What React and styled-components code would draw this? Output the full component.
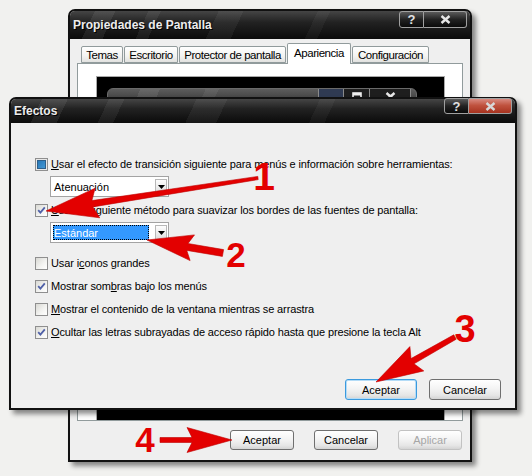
import React from "react";
import styled, { createGlobalStyle, css } from "styled-components";

const GlobalStyle = createGlobalStyle`
  html, body { margin: 0; padding: 0; }
  body {
    background: #f1f1ef;
    font-family: "Liberation Sans", Arial, sans-serif;
    font-size: 11px;
    color: #000;
  }
  #root { width: 532px; height: 476px; overflow: hidden; }
`;

const Desktop = styled.div`
  position: relative;
  width: 532px;
  height: 476px;
  overflow: hidden;
  background: #f1f1ef;
`;

const Window = styled.div`
  position: absolute;
  left: ${(p) => p.$x}px;
  top: ${(p) => p.$y}px;
  width: ${(p) => p.$w}px;
  height: ${(p) => p.$h}px;
  box-sizing: border-box;
  display: flex;
  flex-direction: column;
  background: #efefef;
  border: 2px solid #111;
  border-radius: 7px 7px 0 0;
  box-shadow: 4px 4px 5px rgba(0, 0, 0, 0.45);
`;

const TitleBar = styled.div`
  flex: none;
  height: ${(p) => p.$h}px;
  display: flex;
  align-items: flex-start;
  justify-content: space-between;
  padding: 0 ${(p) => p.$pr}px 0 3px;
  border-radius: 5px 5px 0 0;
  background:
    linear-gradient(115deg, transparent 0 6%, rgba(255,255,255,0.07) 6% 11%, transparent 11% 19%,
      rgba(255,255,255,0.06) 19% 22%, transparent 22% 36%, rgba(255,255,255,0.05) 36% 42%,
      transparent 42% 60%, rgba(255,255,255,0.04) 60% 63%, transparent 63%),
    linear-gradient(180deg, #454545 0%, #222 40%, #0b0b0b 100%);
`;

const Title = styled.div`
  align-self: center;
  font-family: "Liberation Sans", Arial, sans-serif;
  font-weight: bold;
  font-size: 12px;
  color: #ececec;
  text-shadow: 1px 1px 0 #000;
`;

const CapGroup = styled.div`
  display: flex;
  margin-top: ${(p) => p.$mt}px;
`;

const CapBtn = styled.div`
  box-sizing: border-box;
  width: ${(p) => p.$w}px;
  height: ${(p) => p.$h}px;
  display: flex;
  align-items: center;
  justify-content: center;
  border: 1px solid #a0a0a0;
  border-radius: ${(p) => (p.$close ? "0 3px 3px 0" : "3px 0 0 3px")};
  ${(p) => p.$close && "border-left: none;"}
  font: bold 13px "Liberation Sans", Arial, sans-serif;
  color: #e2e2e2;
  background: ${(p) =>
    p.$red
      ? "linear-gradient(180deg, #d98a80 0%, #c0533f 45%, #a7321f 100%)"
      : "linear-gradient(180deg, #5a5a5a 0%, #222 50%, #0a0a0a 100%)"};
`;

const CloseGlyph = ({ color = "#e6e6e6" }) => (
  <svg width="11" height="9" viewBox="0 0 11 9">
    <path d="M1.5 1 L9.5 8 M9.5 1 L1.5 8" stroke={color} strokeWidth="2.4" fill="none" />
  </svg>
);

/* ---------- back window ---------- */

const BackBody = styled.div`
  flex: 1;
  display: flex;
  flex-direction: column;
  padding: 4px 7px 10px 7px;
  min-height: 0;
`;

const TabRow = styled.div`
  display: flex;
  align-items: flex-end;
  gap: 1px;
  height: 21px;
  padding-left: 4px;
  margin-bottom: -1px;
  position: relative;
  z-index: 1;
`;

const Tab = styled.div`
  box-sizing: border-box;
  width: ${(p) => p.$w}px;
  height: ${(p) => (p.$active ? 21 : 17)}px;
  margin-bottom: ${(p) => (p.$active ? 0 : 1)}px;
  display: flex;
  align-items: ${(p) => (p.$active ? "flex-start" : "center")};
  padding-top: ${(p) => (p.$active ? 3 : 0)}px;
  justify-content: center;
  border: 1px solid #919b9c;
  border-bottom: ${(p) => (p.$active ? "none" : "1px solid #919b9c")};
  border-radius: 2px 2px 0 0;
  background: ${(p) =>
    p.$active ? "#fff" : "linear-gradient(180deg, #fff 0%, #f3f3f1 60%, #e2e2e0 100%)"};
  font-family: "Liberation Sans", Arial, sans-serif;
  font-size: 11.5px;
  letter-spacing: -0.45px;
  white-space: nowrap;
`;

const TabPanel = styled.div`
  flex: 1;
  border: 1px solid #919b9c;
  background: #fff;
  padding: 12px 0 0 18px;
  overflow: hidden;
`;

const Preview = styled.div`
  box-sizing: border-box;
  width: 349px;
  height: 360px;
  background: #000;
  border: 1px solid #a9a9a9;
  padding: 11px 0 0 10px;
`;

const MiniWindow = styled.div`
  box-sizing: border-box;
  width: 310px;
  height: 40px;
  border: 1px solid #6a6a6a;
  border-radius: 6px 6px 0 0;
  background:
    linear-gradient(115deg, transparent 0 10%, rgba(255,255,255,0.08) 10% 16%, transparent 16% 30%,
      rgba(255,255,255,0.06) 30% 34%, transparent 34%),
    linear-gradient(180deg, #5c5c5c 0%, #2c2c2c 50%, #111 100%);
  display: flex;
  justify-content: flex-end;
  padding: 0 5px 0 0;
`;

const MiniBtn = styled.div`
  box-sizing: border-box;
  width: ${(p) => p.$w}px;
  height: 18px;
  border: 1px solid #8a8a8a;
  border-top: none;
  margin-left: -1px;
  background: ${(p) => (p.$blue ? "#2f3a52" : "#1e1e1e")};
  display: flex;
  justify-content: center;
  padding-top: 3px;
`;

const ButtonRow = styled.div`
  display: flex;
  justify-content: flex-end;
  gap: ${(p) => p.$gap}px;
  margin-top: ${(p) => p.$mt};
  padding-right: ${(p) => p.$pr}px;
`;

const Button = styled.div`
  box-sizing: border-box;
  width: ${(p) => p.$w}px;
  height: ${(p) => p.$h}px;
  display: flex;
  align-items: center;
  justify-content: center;
  border: 1px solid ${(p) => (p.$disabled ? "#c2c2c2" : "#6f6f6f")};
  border-radius: 3px;
  background: linear-gradient(180deg, #ffffff 0%, #f4f4f4 45%, #e6e6e6 80%, #d4d4d4 100%);
  color: ${(p) => (p.$disabled ? "#a6a6a6" : "#000")};
  font-size: 11px;
  ${(p) =>
    p.$focus &&
    css`
      border-color: #3b9ade;
      box-shadow: inset 0 0 0 1px #b4dcf7;
    `}
`;

/* ---------- dialog ---------- */

const DialogBody = styled.div`
  flex: 1;
  display: flex;
  flex-direction: column;
  padding: 35px 0 8px 24px;
`;

const Row = styled.div`
  display: flex;
  align-items: center;
  gap: 3px;
  height: 13px;
  margin-top: ${(p) => p.$mt || 0}px;
`;

const Box = styled.span`
  box-sizing: border-box;
  flex: none;
  width: 13px;
  height: 13px;
  border: 1px solid #8f8f8f;
  display: flex;
  align-items: center;
  justify-content: center;
  background: ${(p) =>
    p.$hot
      ? "linear-gradient(135deg, #1f6fb0 0%, #4aa0dc 100%)"
      : "linear-gradient(135deg, #d9d9d4 0%, #f4f4f2 60%, #fff 100%)"};
  ${(p) => p.$hot && "box-shadow: inset 0 0 0 1px #e8e8e8, inset 0 0 0 2px #2d5f8a;"}
`;

const Label = styled.span`
  white-space: nowrap;
  line-height: 13px;
  letter-spacing: -0.12px;
  u { text-decoration: underline; text-underline-offset: 1px; }
`;

const Select = styled.div`
  box-sizing: border-box;
  width: 119px;
  height: 21px;
  margin: ${(p) => p.$mt}px 0 0 15px;
  border: 1px solid #a3a3a3;
  background: #fff;
  display: flex;
  align-items: stretch;
  padding: 2px 1px 2px 2px;
`;

const SelectValue = styled.div`
  flex: 1;
  display: flex;
  align-items: center;
  padding-left: 1px;
  ${(p) =>
    p.$selected &&
    css`
      background: #3399ff;
      color: #fff;
      outline: 1px dotted #000;
      outline-offset: -1px;
    `}
`;

const SelectArrow = styled.div`
  box-sizing: border-box;
  width: 12px;
  margin-left: 6px;
  border: 1px solid #b8b8b8;
  background: linear-gradient(180deg, #fdfdfd 0%, #ececec 60%, #dcdcdc 100%);
  display: flex;
  align-items: center;
  justify-content: center;
`;

const Annotations = styled.svg`
  position: absolute;
  left: 0;
  top: 0;
  width: 532px;
  height: 476px;
  pointer-events: none;
  z-index: 10;
`;

function arrowPath(tail, tip, w0, w1, headLen, headHalf, notch = 5) {
  const [tx, ty] = tail;
  const [hx, hy] = tip;
  const dx = hx - tx;
  const dy = hy - ty;
  const L = Math.hypot(dx, dy);
  const ux = dx / L;
  const uy = dy / L;
  const px = -uy;
  const py = ux;
  const bx = hx - ux * headLen;
  const by = hy - uy * headLen;
  const nx = bx + ux * notch;
  const ny = by + uy * notch;
  const pts = [
    [tx + px * w0, ty + py * w0],
    [nx + px * w1, ny + py * w1],
    [bx + px * headHalf, by + py * headHalf],
    [hx, hy],
    [bx - px * headHalf, by - py * headHalf],
    [nx - px * w1, ny - py * w1],
    [tx - px * w0, ty - py * w0],
  ];
  return "M" + pts.map((p) => p[0].toFixed(1) + " " + p[1].toFixed(1)).join(" L") + " Z";
}

const arrows = [
  { tail: [258, 178], tip: [46, 211], w0: 1.6, w1: 3.2, len: 52, half: 15 },
  { tail: [223, 253], tip: [147, 240], w0: 3.5, w1: 3.5, len: 46, half: 13 },
  { tail: [455, 337], tip: [376, 382], w0: 2.5, w1: 3, len: 47, half: 14 },
  { tail: [160, 440], tip: [232, 440], w0: 2.5, w1: 2.5, len: 45, half: 12.5 },
];

const labels = [
  { n: "1", x: 264, y: 190, s: 39 },
  { n: "2", x: 236, y: 267, s: 35 },
  { n: "3", x: 465, y: 342, s: 38 },
  { n: "4", x: 145, y: 452, s: 35 },
];

const Check = () => (
  <svg width="9" height="9" viewBox="0 0 9 9">
    <path d="M1.2 4.2 L3.4 6.6 L7.8 1.4" stroke="#5061a8" strokeWidth="1.8" fill="none" />
  </svg>
);

const Triangle = () => (
  <svg width="7" height="4" viewBox="0 0 7 4">
    <path d="M0 0 L7 0 L3.5 4 Z" fill="#000" />
  </svg>
);

const options = [
  { checked: false, hot: true, mt: 0, label: <><u>U</u>sar el efecto de transición siguiente para menús e información sobre herramientas:</> },
  { select: "Atenuación", mt: 5 },
  { checked: true, mt: 7, label: <><u>U</u>sar el siguiente método para suavizar los bordes de las fuentes de pantalla:</> },
  { select: "Estándar", selected: true, mt: 5 },
  { checked: false, mt: 14, label: <>Usar i<u>c</u>onos grandes</> },
  { checked: true, mt: 10, label: <>Mostrar som<u>b</u>ras bajo los menús</> },
  { checked: false, mt: 10, label: <><u>M</u>ostrar el contenido de la ventana mientras se arrastra</> },
  { checked: true, mt: 10, label: <><u>O</u>cultar las letras subrayadas de acceso rápido hasta que presione la tecla Alt</> },
];

const tabs = [
  { t: "Temas", w: 42 },
  { t: "Escritorio", w: 54 },
  { t: "Protector de pantalla", w: 107 },
  { t: "Apariencia", w: 64, active: true },
  { t: "Configuración", w: 77 },
];

export default function App() {
  return (
    <>
      <GlobalStyle />
      <Desktop>
        <Window $x={68} $y={9} $w={404} $h={453}>
          <TitleBar $h={28} $pr={3}>
            <Title>Propiedades de Pantalla</Title>
            <CapGroup $mt={0}>
              <CapBtn $w={25} $h={17}>?</CapBtn>
              <CapBtn $w={43} $h={17} $close>
                <CloseGlyph />
              </CapBtn>
            </CapGroup>
          </TitleBar>
          <BackBody>
            <TabRow>
              {tabs.map((t) => (
                <Tab key={t.t} $w={t.w} $active={t.active}>
                  {t.t}
                </Tab>
              ))}
            </TabRow>
            <TabPanel>
              <Preview>
                <MiniWindow>
                  <MiniBtn $w={26} $blue>
                    <svg width="10" height="10" viewBox="0 0 10 10">
                      <rect x="2" y="7" width="6" height="2" fill="#9ab" />
                    </svg>
                  </MiniBtn>
                  <MiniBtn $w={27}>
                    <svg width="10" height="10" viewBox="0 0 10 10">
                      <rect x="1" y="1" width="8" height="8" fill="none" stroke="#eee" strokeWidth="1.6" />
                      <rect x="1" y="1" width="8" height="2.5" fill="#eee" />
                    </svg>
                  </MiniBtn>
                  <MiniBtn $w={42}>
                    <CloseGlyph />
                  </MiniBtn>
                </MiniWindow>
              </Preview>
            </TabPanel>
            <ButtonRow $gap={20} $mt="9px" $pr={1}>
              <Button $w={64} $h={20}>Aceptar</Button>
              <Button $w={64} $h={20}>Cancelar</Button>
              <Button $w={64} $h={20} $disabled>Aplicar</Button>
            </ButtonRow>
          </BackBody>
        </Window>

        <Window $x={9} $y={97} $w={508} $h={313}>
          <TitleBar $h={24} $pr={3}>
            <Title>Efectos</Title>
            <CapGroup $mt={-1}>
              <CapBtn $w={25} $h={16}>?</CapBtn>
              <CapBtn $w={43} $h={16} $close $red>
                <CloseGlyph color="#d8d8d8" />
              </CapBtn>
            </CapGroup>
          </TitleBar>
          <DialogBody>
            {options.map((o, i) =>
              o.select ? (
                <Select key={i} $mt={o.mt}>
                  <SelectValue $selected={o.selected}>{o.select}</SelectValue>
                  <SelectArrow>
                    <Triangle />
                  </SelectArrow>
                </Select>
              ) : (
                <Row key={i} $mt={o.mt}>
                  <Box $hot={o.hot}>{o.checked && <Check />}</Box>
                  <Label>{o.label}</Label>
                </Row>
              )
            )}
            <ButtonRow $gap={12} $mt="auto" $pr={14}>
              <Button $w={72} $h={21} $focus>Aceptar</Button>
              <Button $w={72} $h={21}>Cancelar</Button>
            </ButtonRow>
          </DialogBody>
        </Window>

        <Annotations viewBox="0 0 532 476">
          {arrows.map((a, i) => (
            <path
              key={i}
              d={arrowPath(a.tail, a.tip, a.w0, a.w1, a.len, a.half)}
              fill="#e30000"
              stroke="#c00000"
              strokeWidth="0.6"
            />
          ))}
          {labels.map((l) => (
            <text
              key={l.n}
              x={l.x}
              y={l.y}
              textAnchor="middle"
              fontFamily='"Liberation Sans", Arial, sans-serif'
              fontWeight="bold"
              fontSize={l.s}
              fill="#e30000"
            >
              {l.n}
            </text>
          ))}
        </Annotations>
      </Desktop>
    </>
  );
}
